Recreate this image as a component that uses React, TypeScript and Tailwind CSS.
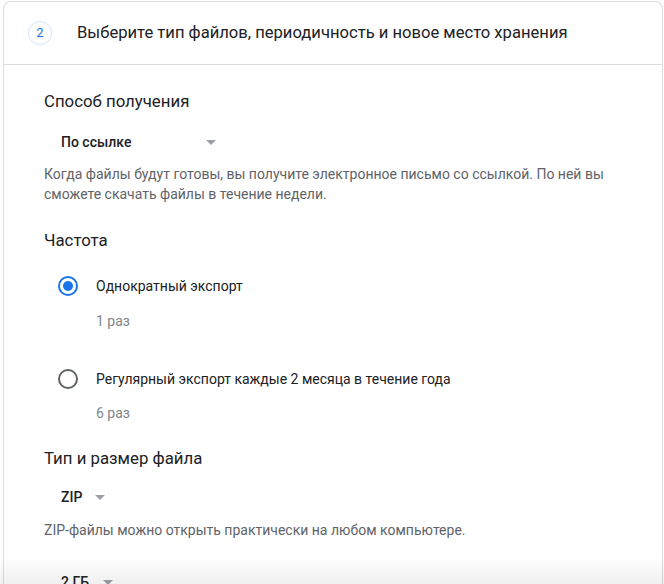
const Arrow = () => (
  <svg width="10" height="5" viewBox="0 0 10 5" className="fill-[#9aa0a6]">
    <path d="M0 0h10L5 5z" />
  </svg>
);

const Radio = ({ checked }: { checked?: boolean }) => (
  <span
    className={
      checked
        ? "flex h-5 w-5 items-center justify-center rounded-full border-2 border-[#1a73e8]"
        : "flex h-5 w-5 items-center justify-center rounded-full border-2 border-[#5f6368]"
    }
  >
    {checked && <span className="h-2.5 w-2.5 rounded-full bg-[#1a73e8]" />}
  </span>
);

export default function App() {
  return (
    <div className="relative h-[584px] overflow-hidden bg-white font-['Roboto',sans-serif] text-[#202124]">
      <div className="ml-[3px] mt-px w-[660px] rounded-t-lg border border-b-0 border-[#dadce0]">
        <header className="flex h-[63px] items-center border-b border-[#dadce0] pl-6">
          <span className="flex h-6 w-6 items-center justify-center rounded-full border border-[#d2e3fc] text-[13px] text-[#1a73e8]">
            2
          </span>
          <h1 className="ml-[25px] text-[16.6px]">Выберите тип файлов, периодичность и новое место хранения</h1>
        </header>

        <div className="pl-10 pr-10 pt-[24px]">
          <h2 className="text-[16.8px] leading-6">Способ получения</h2>
          <div className="mt-[17px] flex h-6 items-center pl-[17px]">
            <span className="w-[145px] text-[14px] font-medium">По ссылке</span>
            <Arrow />
          </div>
          <p className="mt-[10px] text-[14px] leading-5 text-[#5f6368]">
            Когда файлы будут готовы, вы получите электронное письмо со ссылкой. По ней вы сможете скачать файлы в течение недели.
          </p>

          <h2 className="mt-[24px] text-[16.8px] leading-6">Частота</h2>
          <div className="mt-[24px] flex items-center pl-[14px]">
            <Radio checked />
            <span className="ml-[18px] text-[14px] leading-5">Однократный экспорт</span>
          </div>
          <div className="ml-[52px] mt-[15px] text-[14px] leading-5 text-[#80868b]">1 раз</div>

          <div className="mt-[38px] flex items-center pl-[14px]">
            <Radio />
            <span className="ml-[18px] text-[14px] leading-5">Регулярный экспорт каждые 2 месяца в течение года</span>
          </div>
          <div className="ml-[52px] mt-[14px] text-[14px] leading-5 text-[#80868b]">6 раз</div>

          <h2 className="mt-[23px] text-[16.8px] leading-6">Тип и размер файла</h2>
          <div className="mt-[15px] flex h-6 items-center pl-[17px]">
            <span className="w-[34px] text-[14px] font-medium">ZIP</span>
            <Arrow />
          </div>
          <p className="mt-[11px] text-[14px] leading-5 text-[#5f6368]">
            ZIP-файлы можно открыть практически на любом компьютере.
          </p>
          <div className="mt-[30px] flex h-6 items-center pl-[17px]">
            <span className="w-[42px] text-[14px] font-medium">2 ГБ</span>
            <Arrow />
          </div>
        </div>
      </div>
      <div className="pointer-events-none absolute bottom-0 left-0 h-[28px] w-full bg-gradient-to-b from-transparent to-black/[0.06]" />
    </div>
  );
}
